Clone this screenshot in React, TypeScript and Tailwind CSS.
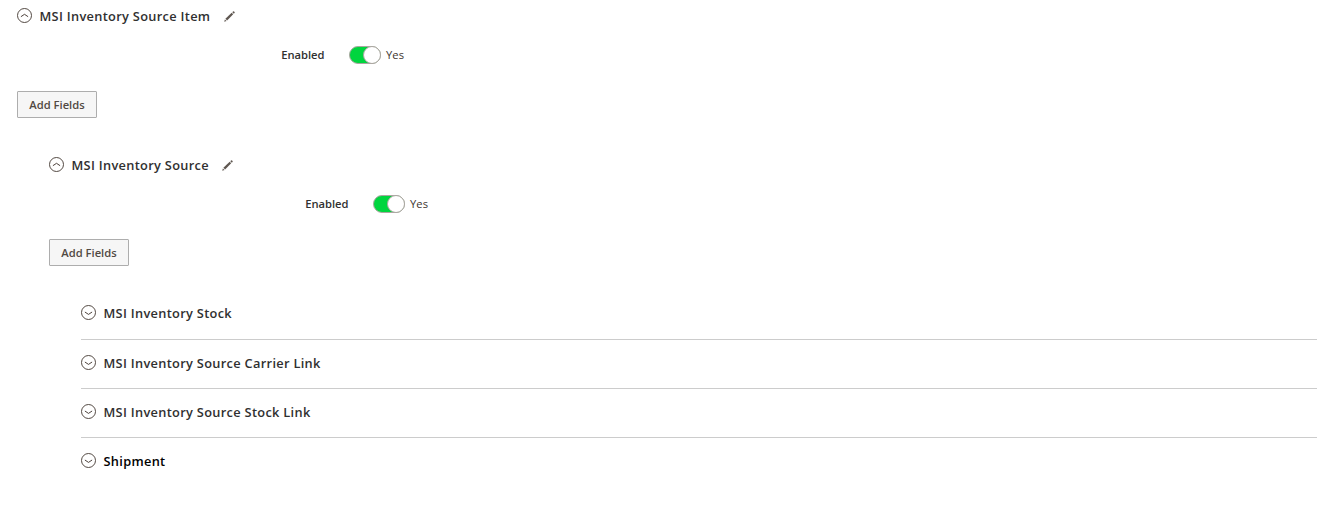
import { ReactNode, useState } from "react";
import { twMerge } from "tailwind-merge";

const links = [
    { name: "MSI Inventory Stock", className: "h-[50px] pt-[14px]" },
    { name: "MSI Inventory Source Carrier Link", className: "h-[49px] pt-[14px]" },
    { name: "MSI Inventory Source Stock Link", className: "h-[49px] pt-[14px]" },
    { name: "Shipment", className: "h-[49px] pt-[14px] border-b-0 text-black" },
]

function ToggleIcon ({open}:{open?:boolean}) {
    return (
        <svg width="15" height="15" viewBox="0 0 15 15" fill="none" stroke="#41362f" className="shrink-0">
            <circle cx="7.5" cy="7.5" r="7" strokeWidth="0.9" />
            <path d={open ? "M3.9 8.7 7.5 6.3 11.1 8.7" : "M3.9 7 7.5 9.4 11.1 7"} strokeWidth="0.95" />
        </svg>
    )
}

function PencilIcon () {
    return (
        <svg width="11" height="11" viewBox="0 0 11 11" fill="#5f5751" className="ml-[13.5px]">
            <path d="M0.2 10.8 0.9 8.4 2.6 10.1z" />
            <path d="M1.4 7.8 7.7 1.7 9.2 3.2 3.1 9.5z" />
            <path d="M8.3 1.2 9 0.5Q9.5 0 10 0.4L10.6 1Q11 1.5 10.5 2L9.8 2.7z" />
        </svg>
    )
}

function Title ({children}:{children:ReactNode}) {
    return (
        <span className="ml-[7.5px] text-[12.8px] leading-[18px] font-semibold tracking-[0.31px] whitespace-nowrap">
            {children}
        </span>
    )
}

function EnabledField ({className}:{className?:string}) {
    const [enabled, setEnabled] = useState(true)

    return (
        <div className="flex h-[18px] items-center text-[11.2px]">
            <span className={twMerge("w-[307.5px] text-right font-semibold text-[#303030]", className)}>Enabled</span>
            <button
                onClick={() => setEnabled(!enabled)}
                className={twMerge([
                    "ml-[24.5px] flex h-[18px] w-8 rounded-full border border-[#aaa6a0] bg-[#e3e3e3]",
                    enabled && "justify-end bg-[#00d53e]",
                ])}
            >
                <span className="-m-px h-[18px] w-[18px] rounded-full border border-[#aaa6a0] bg-white" />
            </button>
            <span className="ml-[5.1px] text-[#41362f]">{enabled ? "Yes" : "No"}</span>
        </div>
    )
}

function AddFields () {
    return (
        <button className="block h-[27px] w-20 rounded-[1px] border border-[#adadad] bg-[#f6f6f6] pt-px text-[11.2px] font-semibold text-[#514943]">
            Add Fields
        </button>
    )
}

function App () {
    return (
        <div className="h-[525px] overflow-hidden bg-white pl-[17px] font-['Open_Sans',sans-serif] text-[#303030]">
            <div className="flex h-8 items-center">
                <div className="pb-px">
                    <ToggleIcon open />
                </div>
                <Title>MSI Inventory Source Item</Title>
                <PencilIcon />
            </div>
            <div className="mt-[14px] mb-[27px]">
                <EnabledField />
            </div>
            <AddFields />

            <div className="mt-[31px] pl-8">
                <div className="flex h-8 items-center">
                    <div className="pb-px">
                        <ToggleIcon open />
                    </div>
                    <Title>MSI Inventory Source</Title>
                    <PencilIcon />
                </div>
                <div className="mt-[14px] mb-[26px]">
                    <EnabledField className="w-[299.5px]" />
                </div>
                <AddFields />

                <div className="mt-6 pl-8">
                    {links.map((link) => (
                        <div key={link.name} className={twMerge("flex items-start border-b border-[#cccccc]", link.className)}>
                            <div className="pt-px">
                                <ToggleIcon />
                            </div>
                            <Title>{link.name}</Title>
                        </div>
                    ))}
                </div>
            </div>
        </div>
    )
}

export default App;
